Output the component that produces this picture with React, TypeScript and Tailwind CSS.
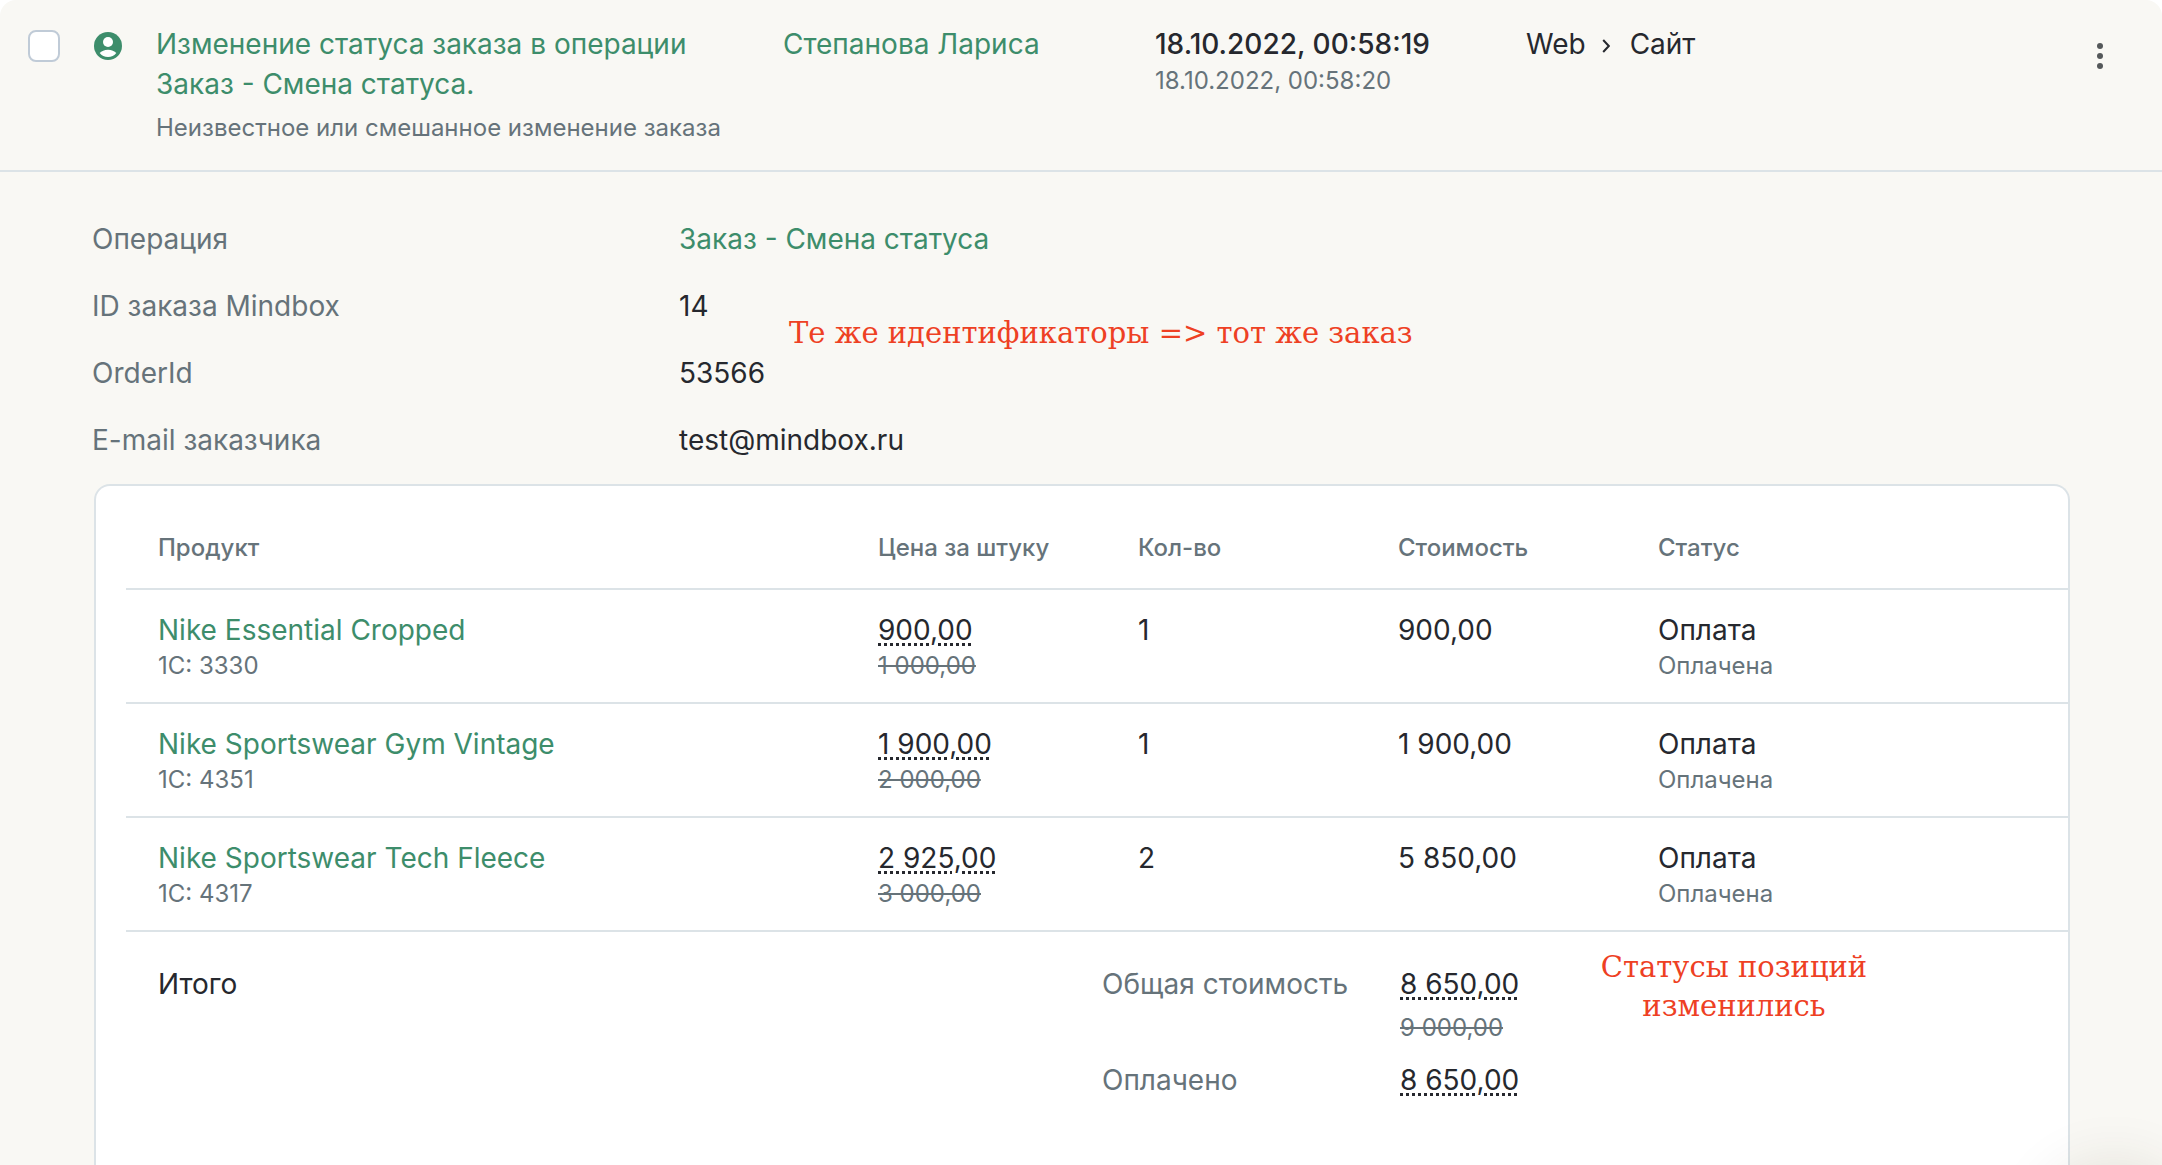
import type { ReactNode } from "react";

const details = [
  { label: "Операция", value: "Заказ - Смена статуса", link: true },
  { label: "ID заказа Mindbox", value: "14" },
  { label: "OrderId", value: "53566" },
  { label: "E-mail заказчика", value: "test@mindbox.ru" },
];

const products = [
  { name: "Nike Essential Cropped", code: "1С: 3330", price: "900,00", oldPrice: "1 000,00", qty: "1", cost: "900,00" },
  { name: "Nike Sportswear Gym Vintage", code: "1С: 4351", price: "1 900,00", oldPrice: "2 000,00", qty: "1", cost: "1 900,00" },
  { name: "Nike Sportswear Tech Fleece", code: "1С: 4317", price: "2 925,00", oldPrice: "3 000,00", qty: "2", cost: "5 850,00" },
];

function Dotted({ children }: { children: ReactNode }) {
  return (
    <span className="underline decoration-dotted decoration-[3px] underline-offset-[3px]">{children}</span>
  );
}

function UserIcon() {
  return (
    <svg viewBox="0 0 28 28" className="mt-2 size-7 shrink-0" aria-hidden="true">
      <circle cx="14" cy="14" r="14" fill="#3d8d6b" />
      <circle cx="14" cy="10" r="5" fill="#fff" />
      <path d="M5.7 21C7.400 19 10.500 17.700 14 17.700S20.600 19 22.300 21C20.400 23.600 17.400 25 14 25S7.600 23.600 5.700 21Z" fill="#fff" />
    </svg>
  );
}

function Header() {
  return (
    <header className="flex border-b-2 border-[#dce3e7] pt-6 pb-[26px] pl-7">
      <input
        type="checkbox"
        aria-label="Выбрать действие"
        className="mt-[6px] size-8 shrink-0 appearance-none rounded-lg border-2 border-[#c0cbd7] bg-white"
      />
      <div className="ml-[34px] flex min-w-0 flex-1">
        <UserIcon />
        <div className="ml-[34px] grid min-w-0 flex-1 grid-cols-[627px_372px_371px_1fr]">
          <div>
            <a href="#action" className="block w-[560px] text-[#3d8d6b]">
              Изменение статуса заказа в операции Заказ - Смена статуса.
            </a>
            <p className="mt-2 text-2xl/8 text-[#66737a]">Неизвестное или смешанное изменение заказа</p>
          </div>
          <div>
            <a href="#customer" className="text-[#3d8d6b]">Степанова Лариса</a>
          </div>
          <div>
            <p className="font-medium">18.10.2022, 00:58:19</p>
            <p className="text-2xl/[34px] text-[#66737a]">18.10.2022, 00:58:20</p>
          </div>
          <div className="flex items-start">
            <span>Web</span>
            <svg viewBox="0 0 8 14" className="mt-[15px] ml-4 h-[14px] w-2" fill="none" stroke="#26282e" strokeWidth="2" aria-hidden="true">
              <path d="M1.200 1 6.800 7 1.200 13" />
            </svg>
            <span className="ml-5">Сайт</span>
          </div>
        </div>
      </div>
      <button type="button" aria-label="Меню" className="mt-3 mr-[42px] flex h-10 w-10 items-center justify-center">
        <svg viewBox="0 0 6 26" className="h-[26px] w-[6px]" fill="#55585a" aria-hidden="true">
          <circle cx="3" cy="3" r="3" />
          <circle cx="3" cy="13" r="3" />
          <circle cx="3" cy="23" r="3" />
        </svg>
      </button>
    </header>
  );
}

function Details() {
  return (
    <section className="relative px-[92px] pt-[47px]">
      <dl className="grid grid-cols-[587px_1fr] gap-y-[27px]">
        {details.map((d) => (
          <div key={d.label} className="contents">
            <dt className="text-[#66737a]">{d.label}</dt>
            <dd>
              {d.link ? <a href="#operation" className="text-[#3d8d6b]">{d.value}</a> : d.value}
            </dd>
          </div>
        ))}
      </dl>
      <p className="absolute top-[142px] left-[789px] font-[DejaVu_Serif,serif] text-[29px]/[39px] whitespace-nowrap text-[#ee4023]">
        {"Те же идентификаторы => тот же заказ"}
      </p>
    </section>
  );
}

function Card() {
  return (
    <section className="relative mt-6 mr-[92px] ml-[94px] flex-1 rounded-t-2xl border-2 border-b-0 border-[#dce3e7] bg-white pl-[30px]">
      <table className="w-full table-fixed text-left">
        <colgroup>
          <col className="w-[720px]" />
          <col className="w-[260px]" />
          <col className="w-[260px]" />
          <col className="w-[260px]" />
          <col />
        </colgroup>
        <thead>
          <tr className="border-b-2 border-[#dce3e7] text-2xl/8 text-[#66737a]">
            {["Продукт", "Цена за штуку", "Кол-во", "Стоимость", "Статус"].map((h) => (
              <th key={h} scope="col" className="pt-[46px] pb-6 pl-8 font-medium">{h}</th>
            ))}
          </tr>
        </thead>
        <tbody className="leading-[38px]">
          {products.map((p) => (
            <tr key={p.name} className="border-b-2 border-[#dce3e7] align-top">
              <td className="pt-[21px] pb-[19px] pl-8">
                <a href="#product" className="block text-[#3d8d6b]">{p.name}</a>
                <p className="text-2xl/[34px] text-[#66737a]">{p.code}</p>
              </td>
              <td className="pt-[21px] pb-[19px] pl-8">
                <p><Dotted>{p.price}</Dotted></p>
                <p className="text-2xl/[34px] text-[#66737a]"><s>{p.oldPrice}</s></p>
              </td>
              <td className="pt-[21px] pb-[19px] pl-8">{p.qty}</td>
              <td className="pt-[21px] pb-[19px] pl-8">{p.cost}</td>
              <td className="pt-[21px] pb-[19px] pl-8">
                <p>Оплата</p>
                <p className="text-2xl/[34px] text-[#66737a]">Оплачена</p>
              </td>
            </tr>
          ))}
        </tbody>
      </table>
      <div className="flex pt-8 pl-8">
        <h2 className="w-[944px]">Итого</h2>
        <dl className="grid grid-cols-[298px_1fr] gap-y-4">
          <dt className="text-[#66737a]">Общая стоимость</dt>
          <dd>
            <p><Dotted>8 650,00</Dotted></p>
            <p className="mt-2 text-2xl/8 text-[#66737a]"><s>9 000,00</s></p>
          </dd>
          <dt className="text-[#66737a]">Оплачено</dt>
          <dd><Dotted>8 650,00</Dotted></dd>
        </dl>
      </div>
      <p className="absolute top-[462px] left-[1488px] w-[300px] text-center font-[DejaVu_Serif,serif] text-[29px]/[39px] text-[#ee4023]">
        Статусы позиций изменились
      </p>
    </section>
  );
}

export default function App() {
  return (
    <div className="bg-white">
      <main className="relative flex min-h-screen flex-col overflow-hidden rounded-t-2xl bg-[#f9f8f4] font-[Inter,sans-serif] text-[28px]/10 text-[#26282e]">
        <Header />
        <Details />
        <Card />
        <div className="pointer-events-none absolute -right-2 -bottom-32 size-28 rounded-full shadow-[0_0_60px_16px_rgba(60,50,20,0.12)]" />
      </main>
    </div>
  );
}
